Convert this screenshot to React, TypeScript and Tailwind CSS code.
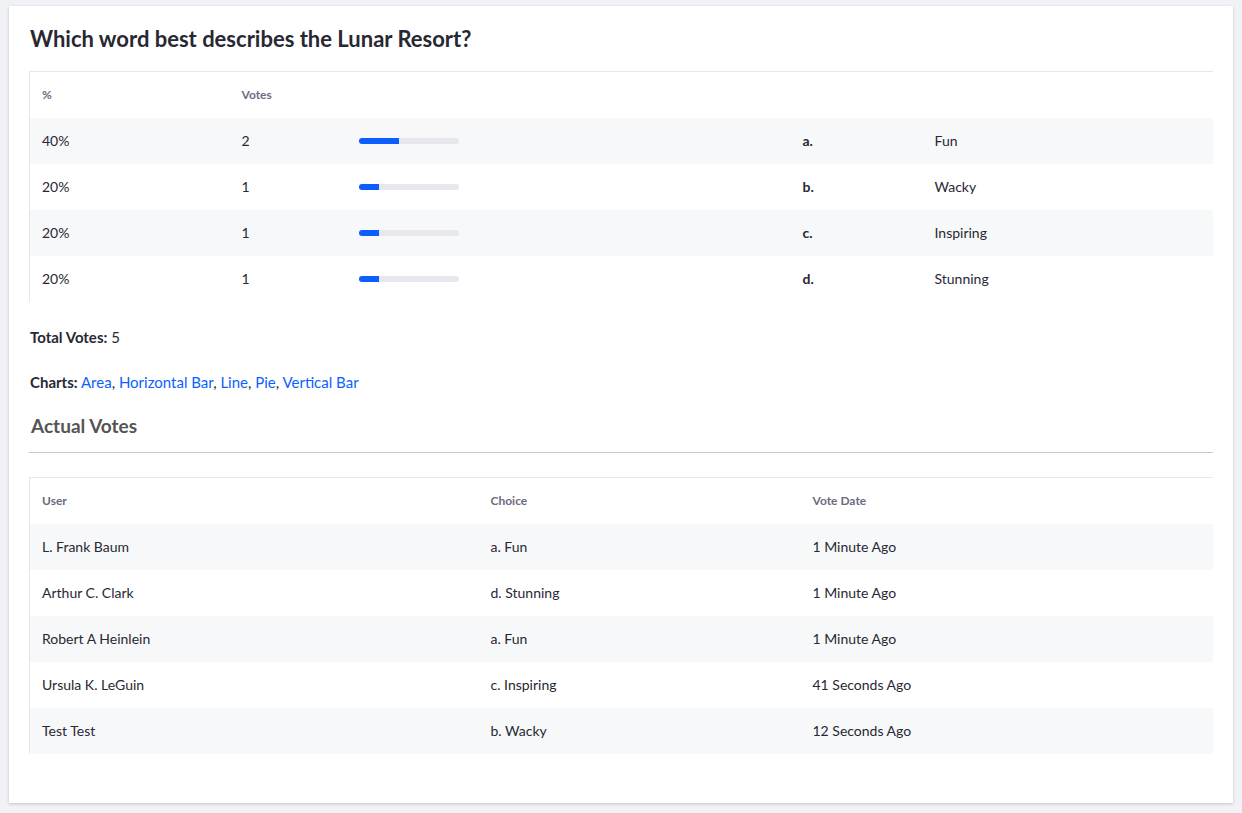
const RESULTS = [
  { pct: 40, votes: 2, key: "a.", label: "Fun" },
  { pct: 20, votes: 1, key: "b.", label: "Wacky" },
  { pct: 20, votes: 1, key: "c.", label: "Inspiring" },
  { pct: 20, votes: 1, key: "d.", label: "Stunning" },
];

const VOTES = [
  { user: "L. Frank Baum", choice: "a. Fun", date: "1 Minute Ago" },
  { user: "Arthur C. Clark", choice: "d. Stunning", date: "1 Minute Ago" },
  { user: "Robert A Heinlein", choice: "a. Fun", date: "1 Minute Ago" },
  { user: "Ursula K. LeGuin", choice: "c. Inspiring", date: "41 Seconds Ago" },
  { user: "Test Test", choice: "b. Wacky", date: "12 Seconds Ago" },
];

export default function App() {
  return (
    <div
      className="min-h-[813px] bg-[#f1f2f5] px-[9px] pt-[6px] pb-[10px] text-[#272833]"
      style={{ fontFamily: "Lato, 'Noto Sans', sans-serif" }}
    >
      <div className="h-[797px] bg-white pl-[20px] pr-[20px] pt-[18px] shadow-[0_1px_3px_rgba(0,0,0,0.2)]">
        <h1 className="pl-[1px] text-[22px] font-bold leading-[30px]">
          Which word best describes the Lunar Resort?
        </h1>

        <table className="mt-[17px] w-full border-l border-t border-[#e7e7ed] text-[14px]">
          <thead>
            <tr className="h-[46px] text-left text-[12px] font-bold text-[#6b6c7e]">
              <th className="w-[212px] pl-[12px]">%</th>
              <th className="w-[117px]">Votes</th>
              <th className="w-[444px]"></th>
              <th className="w-[132px]"></th>
              <th></th>
            </tr>
          </thead>
          <tbody>
            {RESULTS.map((r, i) => (
              <tr key={r.key} className={`h-[46px] ${i % 2 === 0 ? "bg-[#f7f8f9]" : ""}`}>
                <td className="pl-[12px]">{r.pct}%</td>
                <td>{r.votes}</td>
                <td>
                  <div className="h-[6px] w-[100px] overflow-hidden rounded-full bg-[#e7e7ed]">
                    <div className="h-full bg-[#0b5fff]" style={{ width: `${r.pct}%` }} />
                  </div>
                </td>
                <td className="font-bold">{r.key}</td>
                <td>{r.label}</td>
              </tr>
            ))}
          </tbody>
        </table>

        <p className="mt-[24px] pl-[1px] text-[15px]">
          <span className="font-bold">Total Votes:</span> 5
        </p>
        <p className="mt-[23px] pl-[1px] text-[15px]">
          <span className="font-bold">Charts:</span>{" "}
          <a className="text-[#0b5fff]">Area</a>, <a className="text-[#0b5fff]">Horizontal Bar</a>,{" "}
          <a className="text-[#0b5fff]">Line</a>, <a className="text-[#0b5fff]">Pie</a>,{" "}
          <a className="text-[#0b5fff]">Vertical Bar</a>
        </p>

        <h2 className="mt-[18px] border-b border-[#c9c9cf] pb-[12px] pl-[2px] text-[19px] font-bold text-[#555]">
          Actual Votes
        </h2>

        <table className="mt-[24px] w-full border-l border-t border-[#e7e7ed] text-[14px]">
          <thead>
            <tr className="h-[46px] text-left text-[12px] font-bold text-[#6b6c7e]">
              <th className="w-[461px] pl-[12px]">User</th>
              <th className="w-[322px]">Choice</th>
              <th>Vote Date</th>
            </tr>
          </thead>
          <tbody>
            {VOTES.map((v, i) => (
              <tr key={v.user} className={`h-[46px] ${i % 2 === 0 ? "bg-[#f7f8f9]" : ""}`}>
                <td className="pl-[12px]">{v.user}</td>
                <td>{v.choice}</td>
                <td>{v.date}</td>
              </tr>
            ))}
          </tbody>
        </table>
      </div>
    </div>
  );
}
